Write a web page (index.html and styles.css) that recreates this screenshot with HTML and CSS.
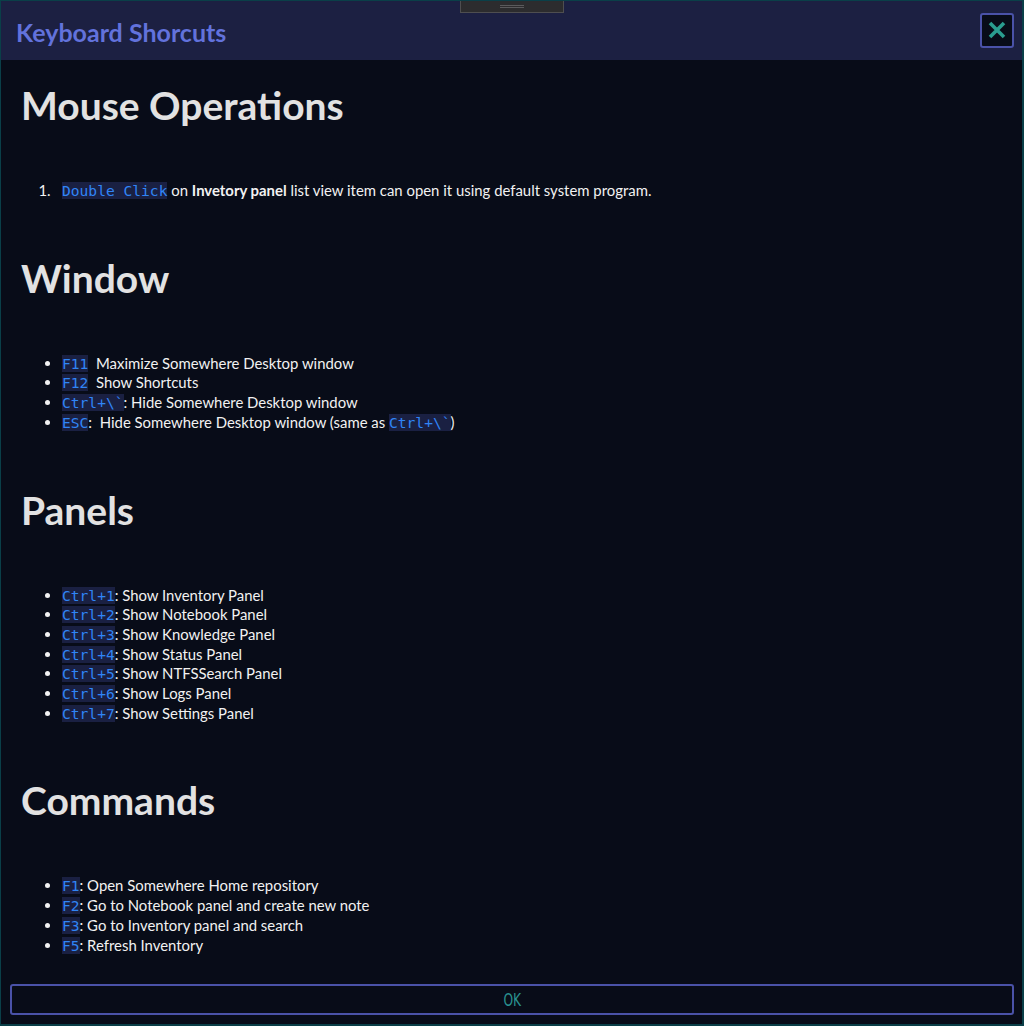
FILE: index.html
```html
<!DOCTYPE html>
<html>
<head>
<meta charset="utf-8">
<link rel="stylesheet" href="styles.css">
</head>
<body>
<div class="dialog">
  <div class="handle"><span class="grip"></span></div>
  <header class="header">
    <h2 class="title">Keyboard Shorcuts</h2>
    <button class="close" aria-label="Close">
      <svg width="18" height="18" viewBox="0 0 18 18"><path d="M2 2 L16 16 M16 2 L2 16" stroke="#2a9d8f" stroke-width="3.6" stroke-linecap="butt"/></svg>
    </button>
  </header>
  <main class="content">
    <h1 class="h first">Mouse Operations</h1>
    <ol class="list olist">
      <li><code>Double Click</code> on <b>Invetory panel</b> list view item can open it using default system program.</li>
    </ol>
    <h1 class="h">Window</h1>
    <ul class="list">
      <li><code>F11</code>&nbsp; Maximize Somewhere Desktop window</li>
      <li><code>F12</code>&nbsp; Show Shortcuts</li>
      <li><code>Ctrl+\`</code>: Hide Somewhere Desktop window</li>
      <li><code>ESC</code>:&nbsp; Hide Somewhere Desktop window (same as <code>Ctrl+\`</code>)</li>
    </ul>
    <h1 class="h">Panels</h1>
    <ul class="list">
      <li><code>Ctrl+1</code>: Show Inventory Panel</li>
      <li><code>Ctrl+2</code>: Show Notebook Panel</li>
      <li><code>Ctrl+3</code>: Show Knowledge Panel</li>
      <li><code>Ctrl+4</code>: Show Status Panel</li>
      <li><code>Ctrl+5</code>: Show NTFSSearch Panel</li>
      <li><code>Ctrl+6</code>: Show Logs Panel</li>
      <li><code>Ctrl+7</code>: Show Settings Panel</li>
    </ul>
    <h1 class="h">Commands</h1>
    <ul class="list">
      <li><code>F1</code>: Open Somewhere Home repository</li>
      <li><code>F2</code>: Go to Notebook panel and create new note</li>
      <li><code>F3</code>: Go to Inventory panel and search</li>
      <li><code>F5</code>: Refresh Inventory</li>
    </ul>
  </main>
  <footer class="footer">
    <button class="ok"><span class="ok-label">OK</span></button>
  </footer>
</div>
</body>
</html>
```
FILE: styles.css
```css
html, body {
  margin: 0;
  padding: 0;
  background: #080c18;
}
.dialog {
  position: relative;
  box-sizing: border-box;
  width: 1024px;
  height: 1026px;
  border-style: solid;
  border-color: #0a3f48;
  border-width: 1px 2px 2px 1px;
  background: #080c18;
  display: flex;
  flex-direction: column;
  overflow: hidden;
  font-family: Lato, "Open Sans", sans-serif;
  color: #f0f0f0;
}
.handle {
  position: absolute;
  left: 459px;
  top: -1px;
  width: 102px;
  height: 11px;
  background: #2c2c2e;
  border: 1px solid #4e4e50;
  display: flex;
  justify-content: center;
  align-items: center;
}
.grip {
  display: block;
  width: 24px;
  height: 1px;
  border-top: 1px solid #5a5a5c;
  border-bottom: 1px solid #5a5a5c;
}
.header {
  height: 59px;
  flex: none;
  background: #1c2042;
  display: flex;
  align-items: center;
  justify-content: space-between;
  padding: 0 8px 0 15px;
}
.title {
  margin: 0;
  font-size: 25px;
  font-weight: 700;
  color: #6272dc;
  padding-top: 3px;
}
.close {
  width: 34px;
  height: 35px;
  margin-top: -1px;
  background: #080c18;
  border: 2px solid #4a52a8;
  border-radius: 3px;
  display: flex;
  align-items: center;
  justify-content: center;
  padding: 0;
}
.content {
  flex: 1;
  overflow: hidden;
  padding: 0 20px;
}
.h {
  margin: 0;
  font-size: 39px;
  line-height: 44px;
  font-weight: 700;
  color: #e2e2e2;
}
.h.first {
  margin-top: 23px;
}
.list {
  margin: 54px 0 55px;
  padding-left: 41px;
  font-size: 14.9px;
  line-height: 19.7px;
  color: #f2f2f2;
}
.olist li::marker {
  content: counter(list-item) ".\00a0\00a0\00a0";
}
.list b {
  font-weight: 700;
}
code {
  font-family: "DejaVu Sans Mono", "Liberation Mono", monospace;
  font-size: 14.6px;
  line-height: 1px;
  color: #3085f6;
  background: #1a2042;
}
.footer {
  flex: none;
  padding: 0 8px 9px 9px;
}
.ok {
  display: flex;
  width: 100%;
  height: 31px;
  align-items: center;
  justify-content: center;
  background: #080c18;
  border: 2px solid #4a52a8;
  border-radius: 3px;
  padding: 0;
}
.ok-label {
  display: inline-block;
  font-family: "DejaVu Sans", sans-serif;
  font-size: 17px;
  color: #2a9190;
  transform: scaleX(0.72);
}
```
